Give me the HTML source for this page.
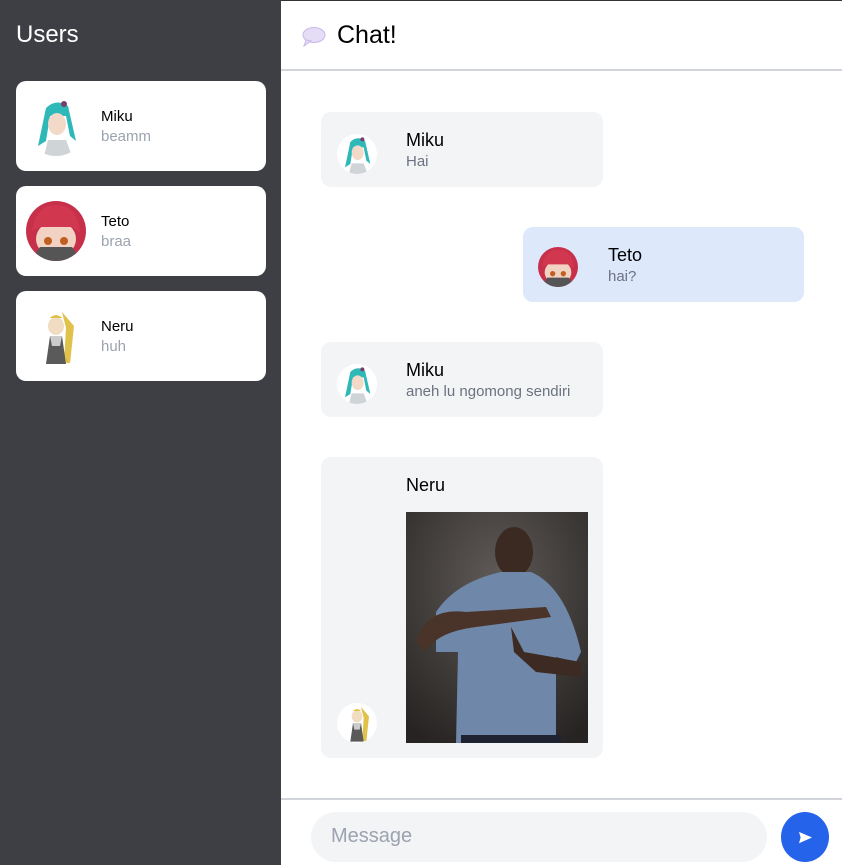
<!DOCTYPE html>
<html><head><meta charset="utf-8"><style>
*{box-sizing:border-box;margin:0;padding:0}
body{width:842px;height:865px;overflow:hidden;font-family:"Segoe UI","Liberation Sans",sans-serif;background:#fff;position:relative}
.side{position:absolute;left:0;top:0;width:281px;height:865px;background:#3e3f45}
.side h1{position:absolute;left:16px;top:21px;color:#fff;font-size:24px;font-weight:400}
.card{position:absolute;left:16px;width:250px;height:90px;background:#fff;border-radius:10px}
.card .av{position:absolute;left:10px;top:15px;width:60px;height:60px;border-radius:50%;overflow:hidden}
.card .n{position:absolute;left:85px;top:27px;font-size:15px;color:#000}
.card .s{position:absolute;left:85px;top:47px;font-size:15px;color:#9ca3af}
.main{position:absolute;left:281px;top:0;width:561px;height:865px;border-top:1px solid #333}
.hdr{position:absolute;left:0;top:0;width:561px;height:70px;border-bottom:2px solid #d1d5db}
.hdr span{position:absolute;left:56px;top:20px;font-size:25px;color:#000}
.b{position:absolute;width:282px;background:#f3f4f6;border-radius:10px}
.b .av{position:absolute;left:16px;width:40px;height:40px;border-radius:50%;overflow:hidden}
.b .n{position:absolute;left:85px;top:18px;font-size:18px;color:#000}
.b .t{position:absolute;left:85px;top:41px;font-size:15px;color:#6b7280}
.foot{position:absolute;left:0;top:797px;width:561px;height:68px;border-top:2px solid #d1d5db}
.inp{position:absolute;left:30px;top:12px;width:456px;height:50px;border-radius:25px;background:#f3f4f6;color:#9ca3af;font-size:20px;padding:13px 0 0 20px}
.send{position:absolute;left:500px;top:12px;width:48px;height:50px;border-radius:50%;background:#2563eb}
</style></head><body>
<svg width="0" height="0" style="position:absolute"><defs>
<symbol id="miku" viewBox="0 0 60 60"><rect width="60" height="60" fill="#fff"/><path d="M12 50 L20 12 Q30 2 42 10 L50 45 L44 40 L40 20 L24 20 L20 45 Z" fill="#2fb8b8"/><ellipse cx="31" cy="28" rx="9" ry="11" fill="#f3d9c8"/><path d="M18 60 L22 44 L40 44 L46 60Z" fill="#cfd4d6"/><circle cx="38" cy="8" r="3" fill="#7a3c6a"/></symbol>
<symbol id="teto" viewBox="0 0 60 60"><rect width="60" height="60" fill="#c7304a"/><ellipse cx="30" cy="38" rx="20" ry="18" fill="#f2d2c2"/><path d="M6 30 Q10 4 30 4 Q52 4 54 32 L46 26 L14 26Z" fill="#d23750"/><circle cx="22" cy="40" r="4" fill="#c06020"/><circle cx="38" cy="40" r="4" fill="#c06020"/><path d="M4 60 L14 46 L46 46 L56 60Z" fill="#555"/></symbol>
<symbol id="neru" viewBox="0 0 60 60"><rect width="60" height="60" fill="#fff"/><path d="M36 6 L48 20 L44 58 L38 56 L40 22Z" fill="#e0c24a"/><ellipse cx="30" cy="20" rx="8" ry="9" fill="#f0dcc0"/><path d="M22 14 Q30 4 38 14 L36 12 L24 12Z" fill="#e0c24a"/><path d="M20 58 L24 30 L36 30 L40 58Z" fill="#5a5a5a"/><path d="M24 30 L36 30 L34 40 L26 40Z" fill="#ccc"/></symbol>
</defs></svg>
<div class="side"><h1>Users</h1>
<div class="card" style="top:81px"><div class="av"><svg width="60" height="60"><use href="#miku"/></svg></div><div class="n">Miku</div><div class="s">beamm</div></div>
<div class="card" style="top:186px"><div class="av"><svg width="60" height="60"><use href="#teto"/></svg></div><div class="n">Teto</div><div class="s">braa</div></div>
<div class="card" style="top:291px"><div class="av"><svg width="60" height="60"><use href="#neru"/></svg></div><div class="n">Neru</div><div class="s">huh</div></div>
</div>
<div class="main">
<div class="hdr"><svg style="position:absolute;left:20px;top:25px" width="25" height="22" viewBox="0 0 25 22"><ellipse cx="13" cy="9" rx="11" ry="7.5" fill="#e5dcf5" stroke="#c9b8ea"/><path d="M5 14 L3 20 L10 15Z" fill="#e5dcf5" stroke="#c9b8ea"/></svg><span>Chat!</span></div>
<div class="b" style="left:40px;top:111px;height:75px"><div class="av" style="top:22px"><svg width="40" height="40"><use href="#miku"/></svg></div><div class="n">Miku</div><div class="t">Hai</div></div>
<div class="b" style="left:242px;top:226px;height:75px;width:281px;background:#dde8fb"><div class="av" style="left:15px;top:20px"><svg width="40" height="40"><use href="#teto"/></svg></div><div class="n">Teto</div><div class="t">hai?</div></div>
<div class="b" style="left:40px;top:341px;height:75px"><div class="av" style="top:22px"><svg width="40" height="40"><use href="#miku"/></svg></div><div class="n">Miku</div><div class="t">aneh lu ngomong sendiri</div></div>
<div class="b" style="left:40px;top:456px;height:301px"><div class="av" style="top:246px"><svg width="40" height="40"><use href="#neru"/></svg></div><div class="n">Neru</div>
<svg style="position:absolute;left:85px;top:55px" width="182" height="231" viewBox="0 0 182 231"><defs><radialGradient id="g" cx="0.5" cy="0.3" r="0.8"><stop offset="0" stop-color="#5f5a57"/><stop offset="1" stop-color="#262322"/></radialGradient></defs><rect width="182" height="231" fill="url(#g)"/><ellipse cx="108" cy="40" rx="19" ry="25" fill="#3a2a22"/><path d="M30 100 Q50 70 95 60 L125 60 Q160 75 175 140 L170 150 L150 145 L150 231 L50 231 L52 140 L30 140Z" fill="#6f87a8"/><path d="M10 130 Q20 95 60 100 L140 95 L145 105 L70 115 Q30 120 20 140Z" fill="#4a3328"/><path d="M105 115 L118 140 L175 150 L175 165 L130 160 L108 140Z" fill="#3d2a22"/><rect x="55" y="223" width="100" height="8" fill="#1f2230"/></svg></div>
<div class="foot"><div class="inp">Message</div><div class="send"><svg style="position:absolute;left:17px;top:19px" width="15" height="13" viewBox="0 0 18 16"><path d="M1 1 L17 8 L1 15 L3 8Z" fill="#fff"/></svg></div></div>
</div>
</body></html>
